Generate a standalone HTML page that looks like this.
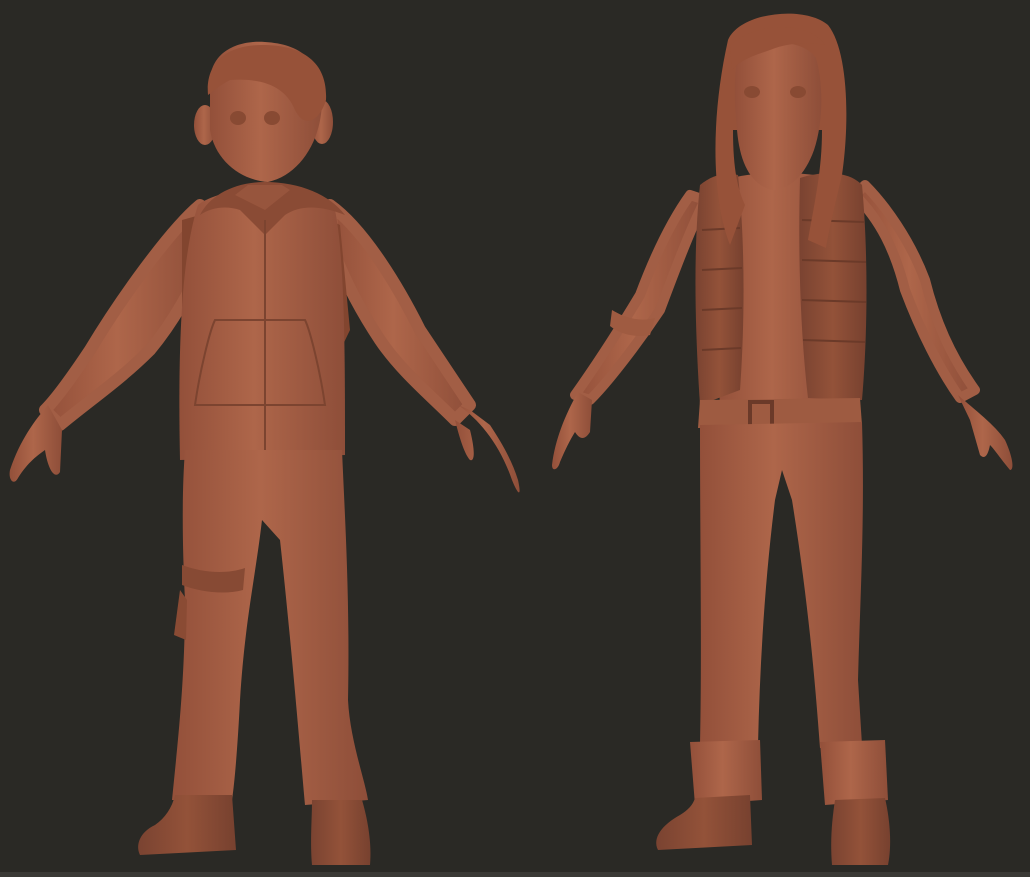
<!DOCTYPE html>
<html><head><meta charset="utf-8"><style>
html,body{margin:0;padding:0;background:#2a2925;}
svg{display:block}
</style></head><body>
<svg width="1030" height="877" viewBox="0 0 1030 877" xmlns="http://www.w3.org/2000/svg">
<defs>
<linearGradient id="c" x1="0" y1="0" x2="1" y2="0">
<stop offset="0" stop-color="#93503a"/><stop offset="0.45" stop-color="#ae664a"/><stop offset="1" stop-color="#8e4e39"/>
</linearGradient>
<linearGradient id="d" x1="0" y1="0" x2="1" y2="0">
<stop offset="0" stop-color="#7a4331"/><stop offset="0.5" stop-color="#935239"/><stop offset="1" stop-color="#77412f"/>
</linearGradient>
</defs>
<rect width="1030" height="877" fill="#2a2925"/>
<rect x="0" y="872" width="1030" height="5" fill="#3a3935"/>

<!-- BOY -->
<g fill="url(#c)">
<g stroke="#a25e45" stroke-width="12" stroke-linejoin="round">
<path d="M200 205 C170 230 120 300 90 350 C70 380 55 400 45 410 L60 425 C90 400 120 380 150 350 C175 320 190 290 205 260 Z"/>
<path d="M330 205 C365 230 400 290 420 330 C440 360 460 390 470 405 L455 420 C430 395 400 370 380 340 C360 310 345 280 335 255 Z"/>
</g>
<path d="M48 405 C35 420 20 440 10 470 C8 480 14 486 18 478 C28 462 38 455 45 450 C48 470 55 480 60 472 L62 430 Z"/>
<path d="M458 405 C480 420 500 445 512 480 C518 495 522 498 518 480 C512 460 500 440 490 425 L470 410 Z M455 420 C460 440 465 455 470 460 C475 462 475 450 470 430 Z"/>
<path fill="#82452f" d="M182 220 L200 215 L195 330 L182 340 Z M320 215 L340 225 L350 330 L338 355 Z"/>
<path d="M198 205 C210 195 240 188 265 188 C290 188 320 195 335 210 C345 260 345 360 345 455 L180 460 C178 360 180 260 198 205 Z"/>
<path fill="#8a4b35" d="M200 215 C210 195 235 182 265 182 C300 182 330 195 345 215 C320 205 300 205 285 215 L265 235 L240 210 C225 205 210 208 200 215 Z"/>
<path fill="#97553d" d="M235 195 L265 210 L290 190 L282 185 L248 185 Z"/>
<path fill="none" stroke="#7c4430" stroke-width="2" d="M195 405 C200 370 210 330 215 320 L305 320 C310 330 320 370 325 405 Z"/>
<line x1="265" y1="220" x2="265" y2="465" stroke="#7c4430" stroke-width="2"/>
<path d="M185 450 L342 450 C345 520 350 600 348 700 C350 740 365 780 368 800 L305 805 C300 750 292 650 280 540 L262 520 C255 580 245 620 240 700 C238 740 235 780 232 800 L172 800 C178 740 185 680 185 600 C182 540 182 490 185 450 Z"/>
<path fill="#874a34" d="M182 565 C200 572 225 575 245 568 L243 590 C225 595 200 592 182 585 Z"/>
<path fill="#8a4b34" d="M180 590 L187 600 L186 640 L174 635 Z"/>
<ellipse cx="205" cy="125" rx="11" ry="20"/>
<ellipse cx="322" cy="122" rx="11" ry="22"/>
<path d="M210 80 C212 50 240 40 265 42 C300 44 322 60 322 100 C322 140 300 175 268 182 C240 180 215 160 210 130 Z"/>
<path fill="#975239" d="M208 95 C205 60 230 45 262 45 C300 45 328 60 326 100 C320 120 305 130 295 110 C285 85 260 78 230 80 C220 85 212 92 208 95 Z"/>
<ellipse cx="238" cy="118" rx="8" ry="7" fill="#884a33"/>
<ellipse cx="272" cy="118" rx="8" ry="7" fill="#884a33"/>
<path fill="url(#d)" d="M175 795 L232 795 L236 850 L140 855 C135 845 140 832 155 825 C165 818 172 808 175 795 Z"/>
<path fill="url(#d)" d="M312 800 L362 800 C368 820 372 845 370 865 L312 865 C310 840 312 820 312 800 Z"/>
</g>

<!-- GIRL -->
<g fill="url(#c)">
<g stroke="#a25e45" stroke-width="10" stroke-linejoin="round">
<path d="M705 200 C690 230 675 270 660 310 C640 340 610 380 590 400 L575 395 C600 360 625 320 640 295 C655 255 672 220 690 195 Z"/>
<path d="M855 195 C880 220 895 250 905 290 C920 330 940 370 960 398 L975 390 C950 355 935 320 925 280 C910 240 885 205 865 185 Z"/>
</g>
<path d="M578 392 C565 415 555 440 552 465 C552 472 558 470 560 462 C565 450 570 440 575 432 C580 440 585 440 590 432 L592 400 Z"/>
<path d="M958 395 C975 410 995 425 1005 440 C1012 455 1015 470 1010 470 C1000 458 995 450 990 445 C988 455 985 460 980 455 L970 420 Z"/>
<path fill="#9f5b41" d="M612 310 C625 318 640 322 655 318 L650 335 C635 338 620 334 610 326 Z"/>
<path d="M725 180 C750 172 790 170 835 178 C840 250 840 330 835 405 L720 405 C715 330 715 250 725 180 Z"/>
<path fill="url(#d)" d="M700 185 C712 175 725 172 738 175 C745 240 745 320 740 390 L700 405 C695 330 693 250 700 185 Z"/>
<path fill="url(#d)" d="M800 178 C825 170 850 172 862 185 C868 250 868 330 862 400 L808 398 C800 330 798 250 800 178 Z"/>
<g stroke="#6b3a29" stroke-width="2" fill="none">
<path d="M702 230 L740 228 M702 270 L742 268 M702 310 L742 308 M702 350 L741 348"/>
<path d="M802 220 L864 222 M802 260 L866 262 M802 300 L866 302 M803 340 L865 342"/>
</g>
<path d="M700 400 L860 398 L862 425 L698 428 Z" fill="#9e5b41"/>
<rect x="750" y="402" width="22" height="26" fill="none" stroke="#6b3a29" stroke-width="4"/>
<path d="M700 425 L862 422 C865 520 860 600 858 680 L862 745 L820 748 C815 680 808 600 792 500 L782 470 L775 500 C765 580 760 660 758 745 L700 745 C702 650 700 550 700 425 Z"/>
<path d="M690 742 L760 740 L762 800 L695 805 Z"/>
<path d="M820 742 L885 740 L888 800 L825 805 Z"/>
<path fill="#975239" d="M728 40 C740 12 805 5 828 25 C848 50 850 120 842 175 C835 205 830 225 826 248 L808 240 C815 200 822 170 822 130 L733 130 C733 170 738 190 745 205 L730 245 C712 200 710 120 728 40 Z"/>
<path d="M737 60 C748 40 800 35 816 58 C823 82 824 120 814 150 C805 175 790 190 772 190 C752 185 740 165 737 130 C734 100 734 80 737 60 Z"/>
<path fill="#975239" d="M730 45 C760 20 810 22 825 45 C810 42 790 42 770 50 C755 55 740 60 732 70 Z"/>
<ellipse cx="752" cy="92" rx="8" ry="6" fill="#884a33"/>
<ellipse cx="798" cy="92" rx="8" ry="6" fill="#884a33"/>
<path fill="url(#d)" d="M695 798 L750 795 L752 845 L658 850 C652 838 662 825 680 815 C688 810 693 805 695 798 Z"/>
<path fill="url(#d)" d="M835 800 L885 798 C890 820 892 845 888 865 L832 865 C830 840 832 820 835 800 Z"/>
</g>
</svg>
</body></html>
